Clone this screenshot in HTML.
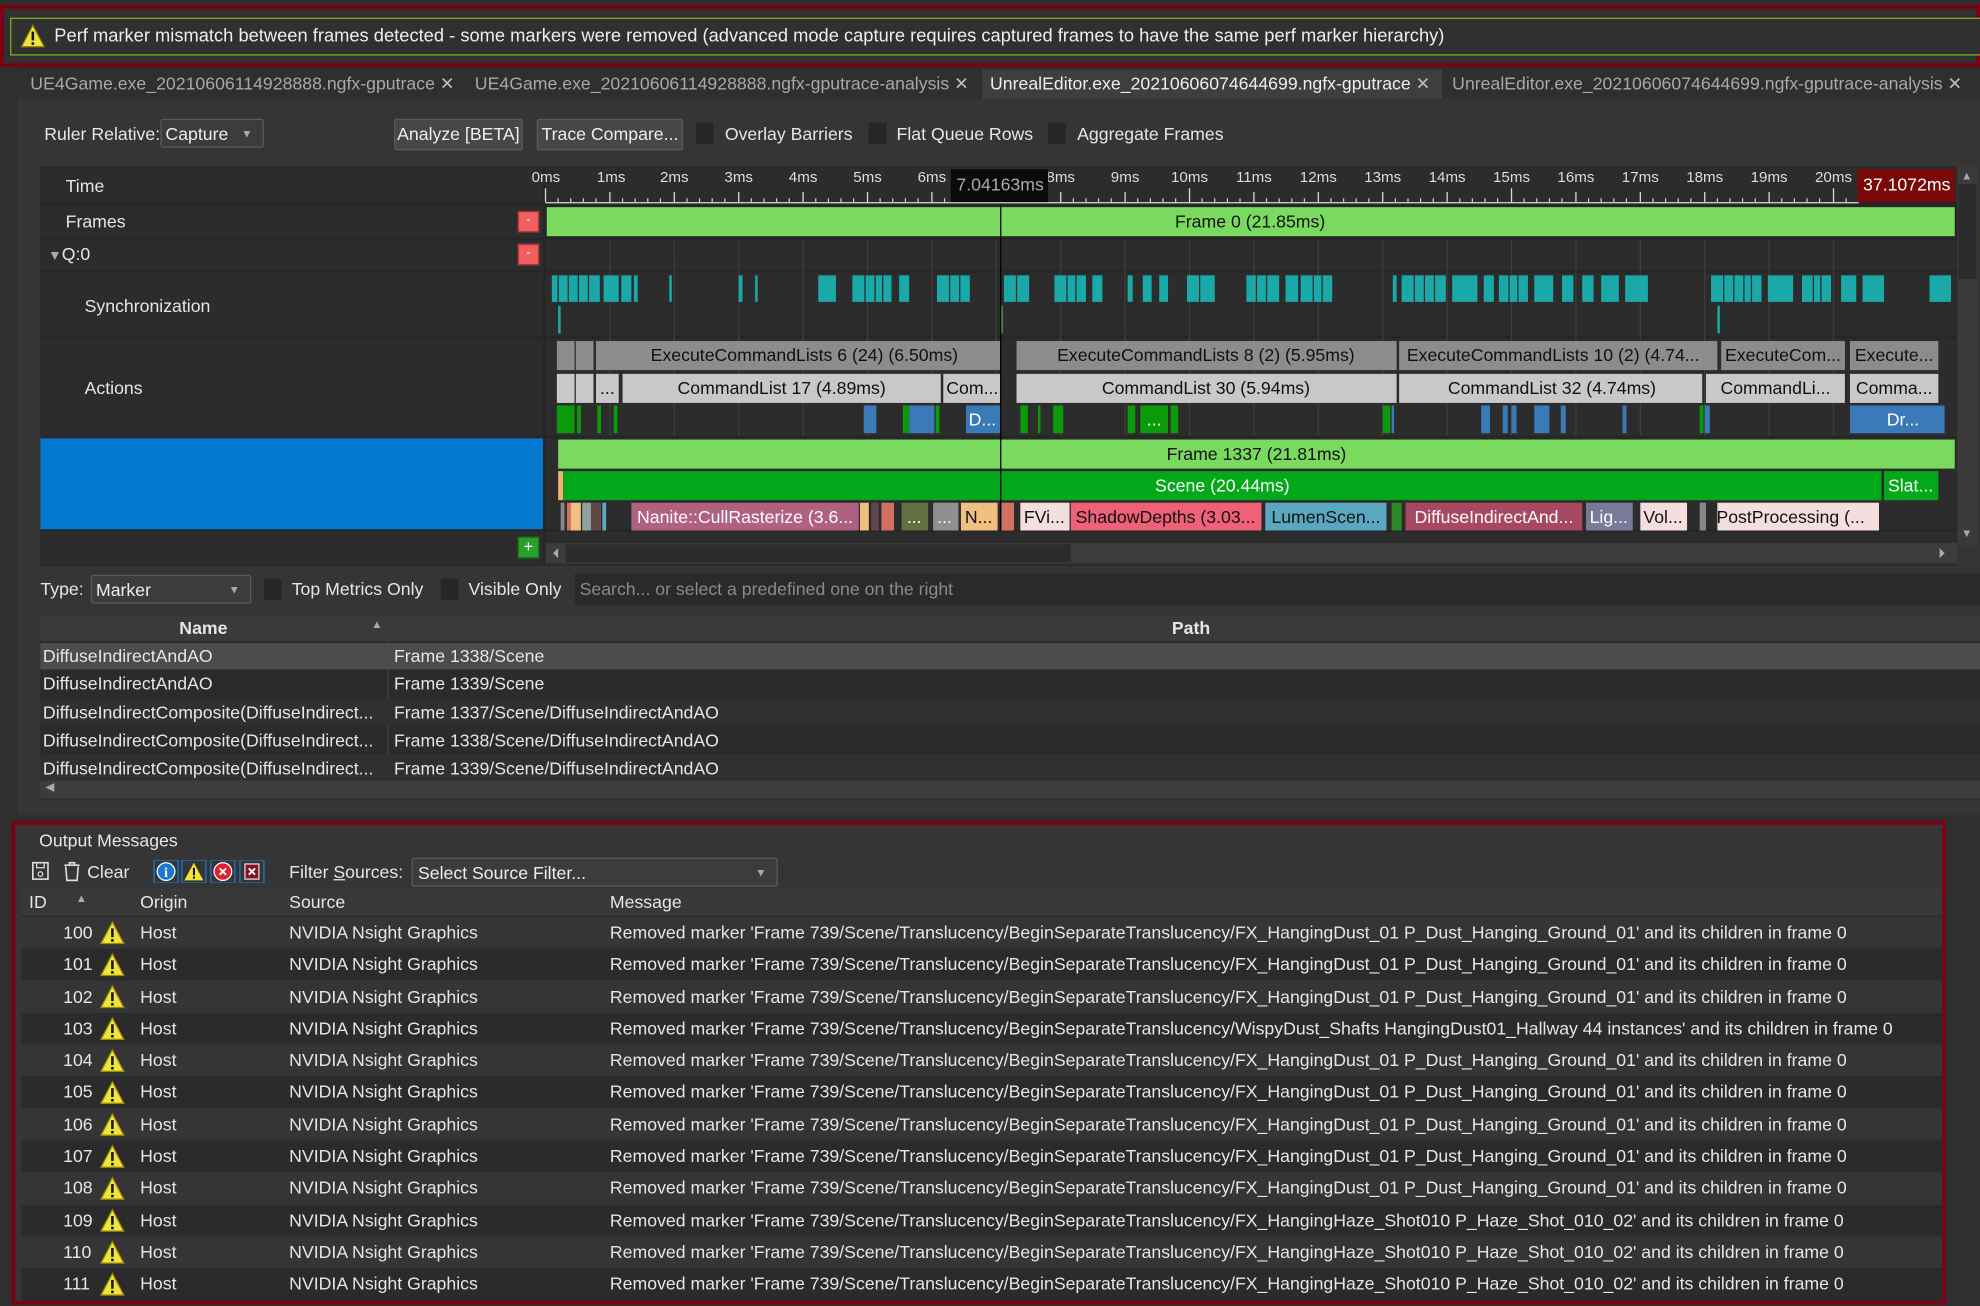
<!DOCTYPE html>
<html><head><meta charset="utf-8"><style>
html,body{margin:0;padding:0;background:#2d2d2d;overflow:hidden;width:1980px;height:1306px}
#w{position:absolute;left:0;top:0;width:1568px;height:1034px;transform:scale(1.26276,1.2631);transform-origin:0 0;font-family:"Liberation Sans",sans-serif;font-size:14px;color:#e6e6e6;background:#2f2f2f}
.a{position:absolute;white-space:nowrap}
.cb{position:absolute;width:14px;height:17px;background:#262626}
.btn{position:absolute;background:#474747;border:1px solid #5a5a5a;border-radius:2px;box-sizing:border-box;text-align:center;line-height:22px;color:#eee}
.lbl{position:absolute;left:0;width:398px;background:#2c2c2c}
</style></head><body><div id="w">
<div class="a" style="left:0;top:4px;width:1568px;height:49px;background:#303030;border:3px solid #7e0012;box-sizing:border-box"></div>
<div class="a" style="left:8px;top:14px;width:1560px;height:30px;border:1px solid #7fb020;border-right:none;box-sizing:border-box;background:#303030"></div>
<svg class="a" style="left:16px;top:19px" width="20" height="19" viewBox="0 0 20 19"><path d="M10 1 L19 18 L1 18 Z" fill="#f3e43a" stroke="#8a7a10" stroke-width="1"/><rect x="9" y="6" width="2" height="7" fill="#111"/><rect x="9" y="14.5" width="2" height="2" fill="#111"/></svg>
<div class="a" style="left:43px;top:21px;font-size:14.5px;color:#eee">Perf marker mismatch between frames detected - some markers were removed (advanced mode capture requires captured frames to have the same perf marker hierarchy)</div>
<div class="a" style="left:14px;top:55px;width:1554px;height:23px;background:#2f2f2f"></div>
<div class="a" style="left:778px;top:55px;width:364px;height:23px;background:#3e3e3e"></div>
<div class="a" style="left:24px;top:58px;color:#a8a8a8">UE4Game.exe_20210606114928888.ngfx-gputrace <span style="color:#bbb">✕</span></div>
<div class="a" style="left:376px;top:58px;color:#a8a8a8">UE4Game.exe_20210606114928888.ngfx-gputrace-analysis <span style="color:#bbb">✕</span></div>
<div class="a" style="left:784px;top:58px;color:#eee">UnrealEditor.exe_20210606074644699.ngfx-gputrace <span style="color:#bbb">✕</span></div>
<div class="a" style="left:1150px;top:58px;color:#a8a8a8">UnrealEditor.exe_20210606074644699.ngfx-gputrace-analysis <span style="color:#bbb">✕</span></div>
<div class="a" style="left:14px;top:78px;width:1554px;height:567px;background:#353535"></div>
<div class="a" style="left:35px;top:98px">Ruler Relative:</div>
<div class="btn" style="left:127px;top:94px;width:82px;height:23px;text-align:left;padding-left:3px;background:#3c3c3c">Capture <span style="position:absolute;right:8px;font-size:9px;color:#aaa">▼</span></div>
<div class="btn" style="left:312px;top:94px;width:102px;height:25px">Analyze [BETA]</div>
<div class="btn" style="left:425px;top:94px;width:116px;height:25px">Trace Compare...</div>
<div class="cb" style="left:551px;top:97px"></div><div class="a" style="left:574px;top:98px">Overlay Barriers</div>
<div class="cb" style="left:688px;top:97px"></div><div class="a" style="left:710px;top:98px">Flat Queue Rows</div>
<div class="cb" style="left:830px;top:97px"></div><div class="a" style="left:853px;top:98px">Aggregate Frames</div>
<div class="a" style="left:32px;top:132px;width:1518px;height:316px;background:#262626">
 <div class="lbl" style="top:1px;height:27px"><span class="a" style="left:20px;top:6px">Time</span></div>
 <div class="lbl" style="top:31px;height:25px"><span class="a" style="left:20px;top:4px">Frames</span><div class="a" style="left:378px;top:4px;width:17px;height:17px;background:#f06060;border:1px solid #b03030;box-sizing:border-box;color:#fff;font-size:10px;text-align:center;line-height:14px">-</div></div>
 <div class="lbl" style="top:58px;height:24px"><span class="a" style="left:6px;top:3px"><span style="font-size:11px;color:#aaa">▼</span>Q:0</span><div class="a" style="left:378px;top:3px;width:17px;height:17px;background:#f06060;border:1px solid #b03030;box-sizing:border-box;color:#fff;font-size:10px;text-align:center;line-height:14px">-</div></div>
 <div class="lbl" style="top:84px;height:50px"><span class="a" style="left:35px;top:18px">Synchronization</span></div>
 <div class="lbl" style="top:136px;height:77px"><span class="a" style="left:35px;top:31px">Actions</span></div>
 <div class="lbl" style="top:215px;height:72px;background:#0279ce"></div>
 <div class="lbl" style="top:289px;height:27px"><div class="a" style="left:378px;top:4px;width:17px;height:17px;background:#2aa02a;border:1px solid #1a701a;box-sizing:border-box;color:#fff;font-size:13px;text-align:center;line-height:14px">+</div></div>
</div>
<svg class="a" style="left:430px;top:132px" width="1120" height="316" viewBox="0 0 1120 316">
 <rect x="0" y="0" width="1120" height="316" fill="#262626"/>
 <rect x="2" y="1" width="1118" height="27" fill="#2c2c2c"/>
 <rect x="2" y="58" width="1118" height="24" fill="#2c2c2c"/>
 <rect x="2" y="84" width="1118" height="50" fill="#2c2c2c"/>
 <rect x="2" y="136" width="1118" height="77" fill="#2c2c2c"/>
 <rect x="2" y="215" width="1118" height="72" fill="#2c2c2c"/>
 <rect x="2" y="289" width="1118" height="27" fill="#2c2c2c"/>
 <g stroke="#3e3e3e" stroke-width="1">
  <path d="M53 58V213M104 58V213M155 58V213M206 58V213M257 58V213M308 58V213M359 58V213M410 58V213M461 58V213M512 58V213M563 58V213M614 58V213M665 58V213M716 58V213M767 58V213M818 58V213M869 58V213M920 58V213M971 58V213M1022 58V213"/>
 </g>
 <g fill="#ddd" font-size="12" font-family="Liberation Sans" text-anchor="middle">
  <text x="54" y="12">1ms</text><text x="104" y="12">2ms</text><text x="155" y="12">3ms</text><text x="206" y="12">4ms</text><text x="257" y="12">5ms</text><text x="308" y="12">6ms</text><text x="410" y="12">8ms</text><text x="461" y="12">9ms</text><text x="512" y="12">10ms</text><text x="563" y="12">11ms</text><text x="614" y="12">12ms</text><text x="665" y="12">13ms</text><text x="716" y="12">14ms</text><text x="767" y="12">15ms</text><text x="818" y="12">16ms</text><text x="869" y="12">17ms</text><text x="920" y="12">18ms</text><text x="971" y="12">19ms</text><text x="1022" y="12">20ms</text>
 </g>
 <path d="M2 28.5H1042" stroke="#ddd"/>
 <path d="M2 17V28M53 20V28M104 20V28M155 20V28M206 20V28M257 20V28M308 20V28M410 20V28M461 20V28M512 17V28M563 20V28M614 20V28M665 20V28M716 20V28M767 17V28M818 20V28M869 20V28M920 20V28M971 20V28M1022 17V28" stroke="#ddd"/>
 <path d="M12 25V28M22 25V28M32 25V28M42 25V28M63 25V28M73 25V28M83 25V28M93 25V28M114 25V28M124 25V28M134 25V28M144 25V28M165 25V28M175 25V28M185 25V28M195 25V28M216 25V28M226 25V28M236 25V28M246 25V28M267 25V28M277 25V28M287 25V28M297 25V28M318 25V28M420 25V28M430 25V28M440 25V28M450 25V28M471 25V28M481 25V28M491 25V28M501 25V28M522 25V28M532 25V28M542 25V28M552 25V28M573 25V28M583 25V28M593 25V28M603 25V28M624 25V28M634 25V28M644 25V28M654 25V28M675 25V28M685 25V28M695 25V28M705 25V28M726 25V28M736 25V28M746 25V28M756 25V28M777 25V28M787 25V28M797 25V28M807 25V28M828 25V28M838 25V28M848 25V28M858 25V28M879 25V28M889 25V28M899 25V28M909 25V28M930 25V28M940 25V28M950 25V28M960 25V28M981 25V28M991 25V28M1001 25V28M1011 25V28M1032 25V28" stroke="#ccc"/>
 <rect x="323" y="2" width="77" height="26" fill="#0a0a0a"/>
 <text x="362" y="19" fill="#aaa" font-size="14" text-anchor="middle" font-family="Liberation Sans">7.04163ms</text>
 <rect x="1041" y="2" width="77" height="26" fill="#7a0808"/>
 <text x="1080" y="19" fill="#fff" font-size="14" text-anchor="middle" font-family="Liberation Sans">37.1072ms</text>
 <rect x="3" y="32" width="1115" height="23" fill="#7ad95f"/>
 <text x="560" y="48" font-family="Liberation Sans" font-size="14" fill="#111" text-anchor="middle">Frame 0 (21.85ms)</text>
 <g fill="#1aa8a8">
  <rect x="7" y="86" width="38" height="21"/><rect x="48" y="86" width="12" height="21"/><rect x="62" y="86" width="8" height="21"/><rect x="72" y="86" width="3" height="21"/><rect x="100" y="86" width="2" height="21"/><rect x="155" y="86" width="3" height="21"/><rect x="168" y="86" width="2" height="21"/><rect x="218" y="86" width="14" height="21"/><rect x="245" y="86" width="31" height="21"/><rect x="282" y="86" width="8" height="21"/><rect x="312" y="86" width="26" height="21"/><rect x="365" y="86" width="20" height="21"/><rect x="405" y="86" width="25" height="21"/><rect x="435" y="86" width="8" height="21"/><rect x="463" y="86" width="4" height="21"/><rect x="475" y="86" width="7" height="21"/><rect x="488" y="86" width="7" height="21"/><rect x="510" y="86" width="22" height="21"/><rect x="557" y="86" width="26" height="21"/><rect x="588" y="86" width="10" height="21"/><rect x="600" y="86" width="25" height="21"/><rect x="673" y="86" width="3" height="21"/><rect x="680" y="86" width="35" height="21"/><rect x="720" y="86" width="20" height="21"/><rect x="745" y="86" width="8" height="21"/><rect x="757" y="86" width="23" height="21"/><rect x="785" y="86" width="15" height="21"/><rect x="807" y="86" width="9" height="21"/><rect x="823" y="86" width="9" height="21"/><rect x="838" y="86" width="14" height="21"/><rect x="857" y="86" width="18" height="21"/><rect x="925" y="86" width="40" height="21"/><rect x="970" y="86" width="20" height="21"/><rect x="997" y="86" width="23" height="21"/><rect x="1028" y="86" width="12" height="21"/><rect x="1045" y="86" width="17" height="21"/><rect x="1098" y="86" width="17" height="21"/>
  <rect x="12" y="110" width="2" height="22"/><rect x="930" y="110" width="2" height="22"/>
 </g>
 <g stroke="#2c2c2c" stroke-width="1"><path d="M12 86v21M20 86v21M28 86v21M36 86v21M255 86v21M263 86v21M269 86v21M322 86v21M330 86v21M375 86v21M415 86v21M422 86v21M520 86v21M565 86v21M573 86v21M610 86v21M617 86v21M690 86v21M698 86v21M706 86v21M765 86v21M772 86v21M935 86v21M943 86v21M951 86v21M957 86v21M1006 86v21M1012 86v21"/></g>
 <rect x="363" y="110" width="1" height="22" fill="#5cb84c"/>
 <g fill="#8c8c8c"><rect x="11" y="138" width="14" height="23"/><rect x="26" y="138" width="14" height="23"/><rect x="42" y="138" width="320" height="23"/><rect x="375" y="138" width="301" height="23"/><rect x="678" y="138" width="252" height="23"/><rect x="933" y="138" width="98" height="23"/><rect x="1035" y="138" width="70" height="23"/></g>
 <g fill="#c8c8c8"><rect x="11" y="164" width="14" height="23"/><rect x="26" y="164" width="14" height="23"/><rect x="42" y="164" width="18" height="23"/><rect x="63" y="164" width="252" height="23"/><rect x="317" y="164" width="45" height="23"/><rect x="375" y="164" width="301" height="23"/><rect x="678" y="164" width="240" height="23"/><rect x="921" y="164" width="110" height="23"/><rect x="1035" y="164" width="70" height="23"/></g>
 <g font-family="Liberation Sans" font-size="14" fill="#111" text-anchor="middle">
  <text x="207" y="154">ExecuteCommandLists 6 (24) (6.50ms)</text><text x="525" y="154">ExecuteCommandLists 8 (2) (5.95ms)</text><text x="800" y="154">ExecuteCommandLists 10 (2) (4.74...</text><text x="982" y="154">ExecuteCom...</text><text x="1070" y="154">Execute...</text>
  <text x="51" y="180">...</text><text x="189" y="180">CommandList 17 (4.89ms)</text><text x="340" y="180">Com...</text><text x="525" y="180">CommandList 30 (5.94ms)</text><text x="799" y="180">CommandList 32 (4.74ms)</text><text x="976" y="180">CommandLi...</text><text x="1070" y="180">Comma...</text>
 </g>
 <g fill="#0a9a0a"><rect x="11" y="189" width="14" height="22"/><rect x="27" y="189" width="3" height="22"/><rect x="43" y="189" width="3" height="22"/><rect x="56" y="189" width="3" height="22"/><rect x="285" y="189" width="5" height="22"/><rect x="311" y="189" width="3" height="22"/><rect x="378" y="189" width="6" height="22"/><rect x="392" y="189" width="2" height="22"/><rect x="404" y="189" width="8" height="22"/><rect x="463" y="189" width="6" height="22"/><rect x="473" y="189" width="22" height="22"/><rect x="497" y="189" width="6" height="22"/><rect x="665" y="189" width="6" height="22"/><rect x="916" y="189" width="3" height="22"/></g>
 <g fill="#3a7ab8"><rect x="254" y="189" width="10" height="22"/><rect x="290" y="189" width="20" height="22"/><rect x="335" y="189" width="27" height="22"/><rect x="672" y="189" width="2" height="22"/><rect x="743" y="189" width="7" height="22"/><rect x="760" y="189" width="4" height="22"/><rect x="767" y="189" width="4" height="22"/><rect x="785" y="189" width="12" height="22"/><rect x="806" y="189" width="4" height="22"/><rect x="855" y="189" width="3" height="22"/><rect x="920" y="189" width="4" height="22"/><rect x="1035" y="189" width="75" height="22"/></g>
 <g font-family="Liberation Sans" font-size="14" fill="#fff" text-anchor="middle"><text x="348" y="205">D...</text><text x="484" y="205">...</text><text x="1077" y="205">Dr...</text></g>
 <rect x="12" y="216" width="1106" height="23" fill="#7ad95f"/>
 <text x="565" y="232" font-family="Liberation Sans" font-size="14" fill="#111" text-anchor="middle">Frame 1337 (21.81ms)</text>
 <rect x="12" y="241" width="4" height="23" fill="#f0b070"/>
 <rect x="16" y="241" width="1044" height="23" fill="#00a81a"/>
 <rect x="1062" y="241" width="43" height="23" fill="#00a81a"/>
 <g font-family="Liberation Sans" font-size="14" fill="#fff" text-anchor="middle"><text x="538" y="257">Scene (20.44ms)</text><text x="1083" y="257">Slat...</text></g>
 <rect x="14" y="266" width="3" height="22" fill="#888"/><rect x="19" y="266" width="3" height="22" fill="#d07060"/><rect x="22" y="266" width="8" height="22" fill="#f0c080"/><rect x="31" y="266" width="7" height="22" fill="#90a0a0"/><rect x="38" y="266" width="8" height="22" fill="#604848"/><rect x="47" y="266" width="3" height="22" fill="#5aa8c0"/>
 <rect x="70" y="266" width="180" height="22" fill="#b06080"/><rect x="251" y="266" width="7" height="22" fill="#f0c080"/><rect x="260" y="266" width="6" height="22" fill="#604848"/><rect x="268" y="266" width="10" height="22" fill="#d07060"/><rect x="284" y="266" width="21" height="22" fill="#607040"/><rect x="309" y="266" width="20" height="22" fill="#909090"/><rect x="331" y="266" width="29" height="22" fill="#f0c080"/>
 <rect x="363" y="266" width="10" height="22" fill="#d07060"/>
 <rect x="378" y="266" width="39" height="22" fill="#f4dede"/><rect x="418" y="266" width="151" height="22" fill="#f06078"/><rect x="572" y="266" width="96" height="22" fill="#5aa8c0"/><rect x="672" y="266" width="8" height="22" fill="#2a8a2a"/><rect x="683" y="266" width="140" height="22" fill="#a84860"/><rect x="826" y="266" width="37" height="22" fill="#7a7a98"/><rect x="869" y="266" width="37" height="22" fill="#f4dede"/><rect x="916" y="266" width="5" height="22" fill="#888"/><rect x="930" y="266" width="128" height="22" fill="#f4dede"/>
 <g font-family="Liberation Sans" font-size="14" text-anchor="middle">
  <text x="160" y="282" fill="#fff">Nanite::CullRasterize (3.6...</text><text x="294" y="282" fill="#fff">...</text><text x="318" y="282" fill="#fff">...</text><text x="345" y="282" fill="#111">N...</text>
  <text x="397" y="282" fill="#111">FVi...</text><text x="493" y="282" fill="#111">ShadowDepths (3.03...</text><text x="620" y="282" fill="#111">LumenScen...</text><text x="753" y="282" fill="#fff">DiffuseIndirectAnd...</text><text x="844" y="282" fill="#fff">Lig...</text><text x="887" y="282" fill="#111">Vol...</text><text x="988" y="282" fill="#111">PostProcessing (...</text>
 </g>
 <path d="M362.5 30V288" stroke="#000"/>
 <rect x="2" y="298" width="1118" height="16" fill="#3c3c3c"/>
 <rect x="18" y="299" width="400" height="14" fill="#2c2c2c"/>
 <path d="M12 302 L8 306 L12 310Z M1106 302 L1110 306 L1106 310Z" fill="#aaa"/>
</svg>
<div class="a" style="left:421px;top:133px;font-size:12px;color:#ddd">0ms</div>
<div class="a" style="left:1550px;top:132px;width:16px;height:300px;background:#3a3a3a"></div>
<div class="a" style="left:1551px;top:146px;width:14px;height:75px;background:#2b2b2b"></div>
<div class="a" style="left:1553px;top:134px;font-size:9px;color:#aaa">▲</div>
<div class="a" style="left:1553px;top:417px;font-size:9px;color:#aaa">▼</div>
<div class="a" style="left:32px;top:458px">Type:</div>
<div class="btn" style="left:72px;top:455px;width:127px;height:23px;text-align:left;padding-left:3px;background:#3c3c3c">Marker<span style="position:absolute;right:8px;font-size:9px;color:#aaa">▼</span></div>
<div class="cb" style="left:209px;top:458px"></div><div class="a" style="left:231px;top:458px">Top Metrics Only</div>
<div class="cb" style="left:349px;top:458px"></div><div class="a" style="left:371px;top:458px">Visible Only</div>
<div class="a" style="left:455px;top:454px;width:1113px;height:25px;background:#2a2a2a"></div>
<div class="a" style="left:459px;top:458px;color:#8a8a8a">Search... or select a predefined one on the right</div>
<div class="a" style="left:32px;top:487px;width:1536px;height:146px;background:#2b2b2b"></div>
<div class="a" style="left:32px;top:487px;width:1536px;height:21px;background:#3a3a3a;border-bottom:1px solid #222"></div>
<div class="a" style="left:307px;top:487px;width:1px;height:130px;background:#3e3e3e"></div>
<div class="a" style="left:142px;top:489px;font-weight:bold">Name</div>
<div class="a" style="left:294px;top:489px;font-size:9px;color:#aaa">▲</div>
<div class="a" style="left:928px;top:489px;font-weight:bold">Path</div>
<div class="a" style="left:32px;top:509px;width:1536px;height:21px;background:#4c4c4c"></div>
<div class="a" style="left:32px;top:553px;width:1536px;height:21px;background:#303030"></div>
<div class="a" style="left:32px;top:597px;width:1536px;height:21px;background:#303030"></div>
<div class="a" style="left:34px;top:511px">DiffuseIndirectAndAO</div>
<div class="a" style="left:34px;top:533px">DiffuseIndirectAndAO</div>
<div class="a" style="left:34px;top:556px">DiffuseIndirectComposite(DiffuseIndirect...</div>
<div class="a" style="left:34px;top:578px">DiffuseIndirectComposite(DiffuseIndirect...</div>
<div class="a" style="left:34px;top:600px">DiffuseIndirectComposite(DiffuseIndirect...</div>
<div class="a" style="left:312px;top:511px">Frame 1338/Scene</div>
<div class="a" style="left:312px;top:533px">Frame 1339/Scene</div>
<div class="a" style="left:312px;top:556px">Frame 1337/Scene/DiffuseIndirectAndAO</div>
<div class="a" style="left:312px;top:578px">Frame 1338/Scene/DiffuseIndirectAndAO</div>
<div class="a" style="left:312px;top:600px">Frame 1339/Scene/DiffuseIndirectAndAO</div>
<div class="a" style="left:32px;top:618px;width:1536px;height:14px;background:#3c3c3c"></div>
<div class="a" style="left:36px;top:618px;font-size:9px;color:#aaa">◀</div>
<div class="a" style="left:9px;top:650px;width:1532px;height:383px;border:3px solid #7e0012;box-sizing:border-box;background:#353535"></div>
<div class="a" style="left:31px;top:657px">Output Messages</div>
<svg class="a" style="left:24px;top:681px" width="200" height="18" viewBox="0 0 200 18">
 <rect x="2" y="2" width="12" height="13" fill="none" stroke="#ddd" stroke-width="1.3"/><rect x="5" y="2" width="6" height="4" fill="none" stroke="#ddd"/><circle cx="8" cy="11" r="1.8" fill="none" stroke="#ddd"/>
 <path d="M27 4H39M31 4V2H35V4M28 5L29 16H37L38 5" fill="none" stroke="#ddd" stroke-width="1.3"/>
 <rect x="98" y="0" width="19" height="18" fill="none" stroke="#1a78d0"/><circle cx="107.5" cy="9" r="7" fill="#1a78d0" stroke="#fff"/><text x="107.5" y="13.5" font-size="11" font-weight="bold" fill="#fff" text-anchor="middle" font-family="Liberation Serif">i</text>
 <rect x="120" y="0" width="19" height="18" fill="none" stroke="#1a78d0"/><path d="M129.5 2 L137 16 L122 16Z" fill="#f3e43a"/><rect x="128.8" y="6" width="1.6" height="6" fill="#111"/><rect x="128.8" y="13" width="1.6" height="1.6" fill="#111"/>
 <rect x="143" y="0" width="19" height="18" fill="none" stroke="#1a78d0"/><circle cx="152.5" cy="9" r="7" fill="#e02030" stroke="#fff"/><path d="M150 6.5L155 11.5M155 6.5L150 11.5" stroke="#fff" stroke-width="1.5"/>
 <rect x="166" y="0" width="19" height="18" fill="none" stroke="#1a78d0"/><rect x="170" y="3" width="11" height="12" fill="#8a1020" stroke="#ddd"/><path d="M173 6.5L178 11.5M178 6.5L173 11.5" stroke="#fff" stroke-width="1.5"/>
</svg>
<div class="a" style="left:69px;top:682px">Clear</div>
<div class="a" style="left:229px;top:682px">Filter <u>S</u>ources:</div>
<div class="btn" style="left:326px;top:679px;width:290px;height:23px;text-align:left;padding-left:4px;background:#3c3c3c">Select Source Filter...<span style="position:absolute;right:8px;font-size:9px;color:#aaa">▼</span></div>
<div class="a" style="left:17px;top:703px;width:1521px;height:22px;background:#383838;border-bottom:1px solid #2a2a2a"></div>
<div class="a" style="left:23px;top:706px">ID</div><div class="a" style="left:60px;top:706px;font-size:9px;color:#aaa">▲</div>
<div class="a" style="left:111px;top:706px">Origin</div><div class="a" style="left:229px;top:706px">Source</div><div class="a" style="left:483px;top:706px">Message</div>
<div class="a" style="left:17px;top:726px;width:1521px;height:304px;background:#353535"></div>
<div class="a" style="left:17px;top:751px;width:1521px;height:25px;background:#2b2b2b"></div>
<div class="a" style="left:17px;top:802px;width:1521px;height:25px;background:#2b2b2b"></div>
<div class="a" style="left:17px;top:852px;width:1521px;height:25px;background:#2b2b2b"></div>
<div class="a" style="left:17px;top:903px;width:1521px;height:25px;background:#2b2b2b"></div>
<div class="a" style="left:17px;top:954px;width:1521px;height:25px;background:#2b2b2b"></div>
<div class="a" style="left:17px;top:1004px;width:1521px;height:26px;background:#2b2b2b"></div>
<svg class="a" style="left:78px;top:727px" width="22" height="304" viewBox="0 0 22 304"><defs><g id="wt"><path d="M11 2 L20 19 L2 19Z" fill="#f3e43a" stroke="#9a8a10"/><rect x="10" y="7" width="2" height="7" fill="#111"/><rect x="10" y="15.5" width="2" height="2" fill="#111"/></g></defs>
<use href="#wt" y="1"/><use href="#wt" y="26.3"/><use href="#wt" y="51.6"/><use href="#wt" y="76.9"/><use href="#wt" y="102.2"/><use href="#wt" y="127.5"/><use href="#wt" y="152.8"/><use href="#wt" y="178.1"/><use href="#wt" y="203.4"/><use href="#wt" y="228.7"/><use href="#wt" y="254"/><use href="#wt" y="279.3"/></svg>
<div class="a" style="left:50px;top:726px;line-height:25.3px">100<br>101<br>102<br>103<br>104<br>105<br>106<br>107<br>108<br>109<br>110<br>111</div>
<div class="a" style="left:111px;top:726px;line-height:25.3px">Host<br>Host<br>Host<br>Host<br>Host<br>Host<br>Host<br>Host<br>Host<br>Host<br>Host<br>Host</div>
<div class="a" style="left:229px;top:726px;line-height:25.3px">NVIDIA Nsight Graphics<br>NVIDIA Nsight Graphics<br>NVIDIA Nsight Graphics<br>NVIDIA Nsight Graphics<br>NVIDIA Nsight Graphics<br>NVIDIA Nsight Graphics<br>NVIDIA Nsight Graphics<br>NVIDIA Nsight Graphics<br>NVIDIA Nsight Graphics<br>NVIDIA Nsight Graphics<br>NVIDIA Nsight Graphics<br>NVIDIA Nsight Graphics</div>
<div class="a" style="left:483px;top:726px;line-height:25.3px">Removed marker 'Frame 739/Scene/Translucency/BeginSeparateTranslucency/FX_HangingDust_01 P_Dust_Hanging_Ground_01' and its children in frame 0<br>Removed marker 'Frame 739/Scene/Translucency/BeginSeparateTranslucency/FX_HangingDust_01 P_Dust_Hanging_Ground_01' and its children in frame 0<br>Removed marker 'Frame 739/Scene/Translucency/BeginSeparateTranslucency/FX_HangingDust_01 P_Dust_Hanging_Ground_01' and its children in frame 0<br>Removed marker 'Frame 739/Scene/Translucency/BeginSeparateTranslucency/WispyDust_Shafts HangingDust01_Hallway 44 instances' and its children in frame 0<br>Removed marker 'Frame 739/Scene/Translucency/BeginSeparateTranslucency/FX_HangingDust_01 P_Dust_Hanging_Ground_01' and its children in frame 0<br>Removed marker 'Frame 739/Scene/Translucency/BeginSeparateTranslucency/FX_HangingDust_01 P_Dust_Hanging_Ground_01' and its children in frame 0<br>Removed marker 'Frame 739/Scene/Translucency/BeginSeparateTranslucency/FX_HangingDust_01 P_Dust_Hanging_Ground_01' and its children in frame 0<br>Removed marker 'Frame 739/Scene/Translucency/BeginSeparateTranslucency/FX_HangingDust_01 P_Dust_Hanging_Ground_01' and its children in frame 0<br>Removed marker 'Frame 739/Scene/Translucency/BeginSeparateTranslucency/FX_HangingDust_01 P_Dust_Hanging_Ground_01' and its children in frame 0<br>Removed marker 'Frame 739/Scene/Translucency/BeginSeparateTranslucency/FX_HangingHaze_Shot010 P_Haze_Shot_010_02' and its children in frame 0<br>Removed marker 'Frame 739/Scene/Translucency/BeginSeparateTranslucency/FX_HangingHaze_Shot010 P_Haze_Shot_010_02' and its children in frame 0<br>Removed marker 'Frame 739/Scene/Translucency/BeginSeparateTranslucency/FX_HangingHaze_Shot010 P_Haze_Shot_010_02' and its children in frame 0</div>
<div class="a" style="left:1548px;top:650px;width:20px;height:384px;background:#2f2f2f"></div>
</div></body></html>
